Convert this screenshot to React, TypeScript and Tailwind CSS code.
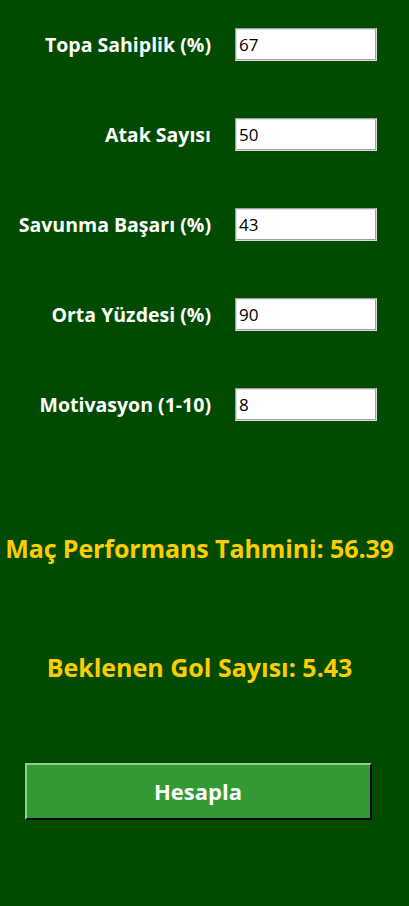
const fields = [
  { label: "Topa Sahiplik (%)", value: "67" },
  { label: "Atak Sayısı", value: "50" },
  { label: "Savunma Başarı (%)", value: "43" },
  { label: "Orta Yüzdesi (%)", value: "90" },
  { label: "Motivasyon (1-10)", value: "8" },
];

const font = { fontFamily: '"Open Sans", "Noto Sans", sans-serif' };

export default function App() {
  return (
    <div
      className="w-[409px] h-[906px] bg-[#004b00] flex flex-col items-center pr-[10px]"
      style={font}
    >
      {/* Input rows */}
      <div className="flex flex-col gap-[57px] pt-[28px] w-[409px] mr-[-10px]">
        {fields.map(({ label, value }) => (
          <div key={label} className="flex items-center h-[33px]">
            <span className="w-[212px] text-right text-white font-bold text-[19.5px] pr-[1px] pt-[1px] whitespace-nowrap">
              {label}
            </span>
            <div className="ml-[23px] w-[142px] h-[33px] border border-t-[#a0a0a0] border-l-[#a0a0a0] border-b-[#dcdcdc] border-r-[#dcdcdc]">
              <div className="w-full h-full bg-white border border-t-[#e3e3e3] border-l-[#e3e3e3] border-b-[#a0a0a0] border-r-[#a0a0a0] flex items-center pl-[2px]">
                <span className="text-[17px] text-black">{value}</span>
              </div>
            </div>
          </div>
        ))}
      </div>

      {/* Results */}
      <p className="mt-[111px] text-[#ffcc00] font-bold text-[25px] tracking-[-0.1px] leading-[32px] whitespace-nowrap">
        Maç Performans Tahmini: 56.39
      </p>
      <p className="mt-[87px] text-[#ffcc00] font-bold text-[25px] leading-[32px] whitespace-nowrap">
        Beklenen Gol Sayısı: 5.43
      </p>

      {/* Button */}
      <button className="mt-[80px] ml-[-3px] w-[347px] h-[57px] bg-[#339933] border-2 border-t-[#8fcf8f] border-l-[#8fcf8f] border-b-black border-r-black text-white font-bold text-[22px]">
        Hesapla
      </button>
    </div>
  );
}
